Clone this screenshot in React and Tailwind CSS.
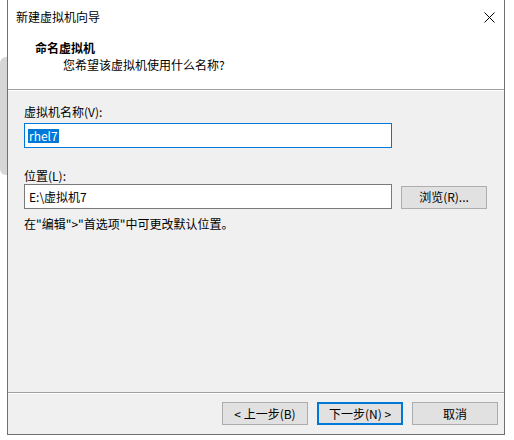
import React from 'react';

const font = "font-['Noto_Sans_CJK_SC','Noto_Sans',sans-serif]";

function Button({ children, primary }) {
  return (
    <button
      className={
        primary
          ? 'flex h-[23px] w-[86px] items-center justify-center border-2 border-[#0078d7] bg-[#e1e1e1] text-[12px] text-black'
          : 'flex h-[23px] w-[86px] items-center justify-center border border-[#adadad] bg-[#e1e1e1] text-[12px] text-black'
      }
    >
      {children}
    </button>
  );
}

export default function App() {
  return (
    <div className={`flex h-[440px] w-[514px] bg-white ${font}`}>
      {/* edge of the window behind */}
      <div className="w-[7px] pt-[57px]">
        <div className="h-[118px] w-[7px] rounded-l-[6px] bg-[#d6d6d6]" />
      </div>

      <div className="flex h-[435px] w-[498px] flex-col border-x border-b border-[#707070]">
        {/* title + header */}
        <div className="h-[89px] bg-white">
          <div className="flex h-[34px] items-center justify-between pl-[8px] pr-[9px]">
            <span className="text-[12px] leading-none text-black">新建虚拟机向导</span>
            <svg width="11" height="11" viewBox="0 0 11 11" className="text-black">
              <path d="M0.5 0.5L10.5 10.5M10.5 0.5L0.5 10.5" stroke="currentColor" strokeWidth="1" />
            </svg>
          </div>
          <div className="pl-[27px] pt-[6px] text-[12px] font-bold leading-[16px] text-black">命名虚拟机</div>
          <div className="pl-[55px] pt-[1px] text-[12px] leading-[16px] text-black">您希望该虚拟机使用什么名称?</div>
        </div>
        <div className="h-px bg-[#a0a0a0]" />
        <div className="h-px bg-white" />

        {/* body */}
        <div className="flex flex-1 flex-col bg-[#f0f0f0] pl-[16px] pt-[13px]">
          <div className="text-[12px] leading-[16px] text-black">虚拟机名称(V):</div>
          <div className="mt-[3px] flex h-[25px] w-[368px] items-center border border-[#0078d7] bg-white pl-[3px]">
            <span className="bg-[#0078d7] px-[1px] text-[12px] leading-[14px] text-white">rhel7</span>
          </div>
          <div className="mt-[20px] text-[12px] leading-[16px] text-black">位置(L):</div>
          <div className="flex items-center gap-[9px]">
            <div className="flex h-[25px] w-[368px] items-center border border-[#7a7a7a] bg-white pl-[4px] text-[12px] text-black">
              E:\虚拟机7
            </div>
            <div className="pt-[1px]">
              <Button>浏览(R)...</Button>
            </div>
          </div>
          <div className="mt-[7px] text-[12px] leading-[16px] text-black">在"编辑">"首选项"中可更改默认位置。</div>
        </div>

        <div className="h-px bg-[#a0a0a0]" />
        <div className="h-px bg-white" />

        {/* footer */}
        <div className="flex h-[40px] items-start justify-end gap-[9px] bg-[#f0f0f0] pr-[6px] pt-[8px]">
          <Button>&lt; 上一步(B)</Button>
          <Button primary>下一步(N) &gt;</Button>
          <Button>取消</Button>
        </div>
      </div>
    </div>
  );
}
